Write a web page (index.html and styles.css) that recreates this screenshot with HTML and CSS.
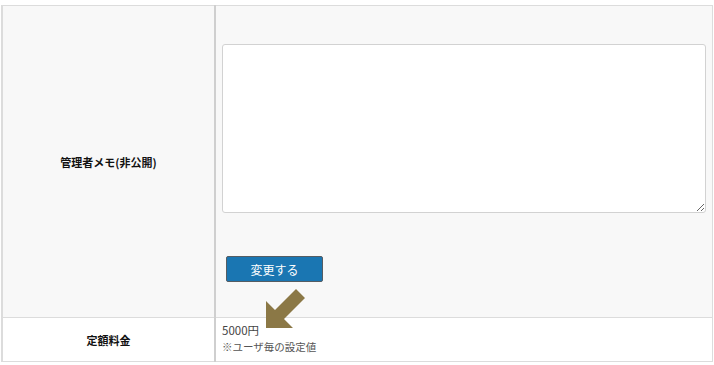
FILE: index.html
```html
<!DOCTYPE html>
<html lang="ja">
<head>
    <meta charset="UTF-8">
    <meta name="viewport" content="width=device-width, initial-scale=1.0">
    <title>設定</title>
    <link rel="stylesheet" href="styles.css">
</head>
<body>

<div class="wrap">
    <table class="settings">
        <tr class="row-memo">
            <th>管理者メモ(非公開)</th>
            <td>
                <textarea class="memo"></textarea>
                <button type="button" class="btn-save">変更する</button>
            </td>
        </tr>
        <tr class="row-fee">
            <th>定額料金</th>
            <td>
                <div class="fee">5000円</div>
                <div class="note">※ユーザ毎の設定値</div>
            </td>
        </tr>
    </table>

    <!-- pointer arrow -->
    <svg class="arrow" width="42" height="42" viewBox="0 0 42 42">
        <polygon points="2,40 2,13 11,22 32,1 41,10 20,31 29,40" fill="#8b7846"/>
    </svg>
</div>

</body>
</html>
```

FILE: styles.css
```css
* {
    margin: 0;
    padding: 0;
    box-sizing: border-box;
}

body {
    font-family: 'Noto Sans CJK JP', 'Noto Sans', sans-serif;
    background: #fff;
    color: #333;
}

.wrap {
    position: relative;
    padding: 5px 1px 0 1px;
}

.settings {
    width: 712px;
    border-collapse: collapse;
    border: 1px solid #dcdcdc;
    border-left: 2px solid #dcdcdc;
}

.settings th {
    width: 214px;
    font-size: 11px;
    font-weight: bold;
    color: #111;
    text-align: center;
    vertical-align: middle;
    border-right: 2px solid #cfcfcf;
    border-bottom: 1px solid #dcdcdc;
}

.settings td {
    border-bottom: 1px solid #dcdcdc;
    padding: 0 6px 0 6px;
    vertical-align: top;
}

.row-memo th,
.row-memo td {
    background: #f8f8f8;
    height: 312px;
}

.row-memo td {
    padding-top: 38px;
}

.memo {
    display: block;
    width: 484px;
    height: 169px;
    border: 1px solid #d2d2d2;
    border-radius: 3px;
    background: #fff;
    resize: vertical;
}

.btn-save {
    display: block;
    margin: 43px 0 0 4px;
    width: 97px;
    height: 26px;
    background: #1a76b2;
    border: 1px solid #555d63;
    border-radius: 2px;
    color: #fff;
    font-family: inherit;
    font-size: 12px;
}

.row-fee th,
.row-fee td {
    height: 44px;
    background: #fff;
}

.row-fee td {
    padding-top: 4px;
}

.fee {
    font-size: 11.5px;
    line-height: 16px;
    color: #444;
}

.note {
    font-size: 10.5px;
    line-height: 14px;
    margin-top: 2px;
    color: #555;
}

.arrow {
    position: absolute;
    left: 264px;
    top: 288px;
}
```
